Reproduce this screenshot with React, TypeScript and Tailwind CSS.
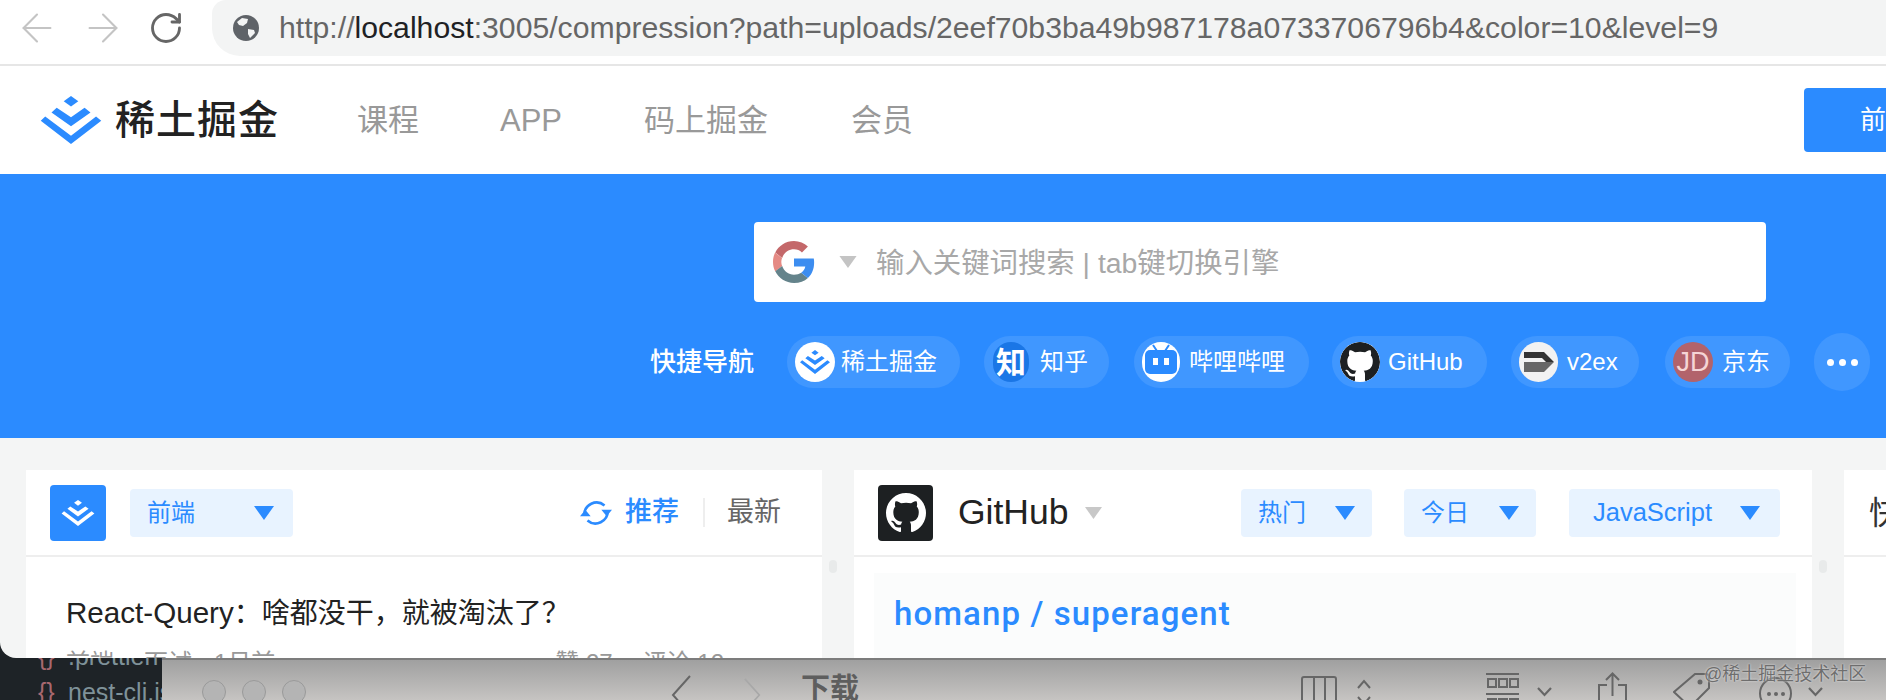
import { ArrowLeft, ArrowRight, RotateCw } from "lucide-react";
import type { ReactNode } from "react";

const sans = "font-['Liberation_Sans','Noto_Sans_CJK_SC',sans-serif]";

function JuejinMark({ className, color }: { className: string; color: string }) {
  return (
    <svg viewBox="0 0 58 46" className={className} fill={color}>
      <path d="M29 0l7 5-7 5-7-5z" />
      <path d="M29 20.300L15.300 11.300l-5 4.400L29 29l18.700-13.300-5.700-4.400z" />
      <path d="M29 38L4.300 19.700 0 23.700 29 46l29-22.300-5-4z" />
    </svg>
  );
}

function GithubMark({ className }: { className: string }) {
  return (
    <svg viewBox="0 0 16 16" className={className} fill="currentColor">
      <path d="M8 0C3.580 0 0 3.580 0 8c0 3.540 2.290 6.530 5.470 7.590.4.070.55-.17.55-.38 0-.19-.01-.82-.01-1.490-2.010.37-2.530-.49-2.690-.94-.09-.23-.48-.94-.82-1.130-.28-.15-.68-.52-.01-.53.63-.01 1.080.58 1.230.82.72 1.210 1.870.87 2.330.66.07-.52.28-.87.51-1.070-1.780-.2-3.640-.89-3.640-3.950 0-.87.31-1.590.82-2.150-.08-.2-.36-1.020.08-2.120 0 0 .67-.21 2.200.82.64-.18 1.320-.27 2-.27s1.360.09 2 .27c1.530-1.040 2.200-.82 2.200-.82.44 1.100.16 1.920.08 2.120.51.56.82 1.270.82 2.150 0 3.070-1.870 3.750-3.650 3.950.29.25.54.73.54 1.480 0 1.070-.01 1.930-.01 2.200 0 .21.15.46.55.38A8.010 8.010 0 0016 8c0-4.420-3.580-8-8-8z" />
    </svg>
  );
}

function GoogleMark() {
  return (
    <svg viewBox="0 0 48 48" className="h-[42px] w-[42px]">
      <path fill="#c4686a" d="M24 9.500c3.500 0 6.700 1.300 9.100 3.500l6.800-6.800C35.800 2.400 30.200 0 24 0 14.600 0 6.500 5.400 2.600 13.200l7.900 6.100C12.400 13.600 17.700 9.500 24 9.500z" />
      <path fill="#e58a84" d="M9.500 24c0-1.600.3-3.100.8-4.600l-7.900-6.200C.9 16.300 0 20 0 24s.9 7.700 2.600 10.800l7.900-6.100c-.6-1.400-1-3-1-4.700z" />
      <path fill="#64838b" d="M24 48c6.500 0 11.900-2.100 15.900-5.800l-7.700-6c-2.100 1.400-4.900 2.300-8.200 2.300-6.300 0-11.600-4.200-13.500-9.900l-7.900 6.100C6.500 42.600 14.600 48 24 48z" />
      <path fill="#3c8df0" d="M47 24.500c0-1.600-.1-3.100-.4-4.500H24v9h12.900c-.6 3-2.200 5.500-4.700 7.200l7.700 6C44.400 38 47 31.900 47 24.500z" />
    </svg>
  );
}

function Caret({ className }: { className: string }) {
  return (
    <svg viewBox="0 0 20 14" className={className} fill="currentColor">
      <path d="M0 0h20L10 14z" />
    </svg>
  );
}

function Select({ label, className }: { label: string; className: string }) {
  return (
    <div className={`flex h-12 items-center justify-between rounded-sm bg-[#e8f3ff] text-[#2b8bff] ${className}`}>
      <span>{label}</span>
      <Caret className="h-[14px] w-5" />
    </div>
  );
}

function Pill({ icon, label, className }: { icon: ReactNode; label: string; className: string }) {
  return (
    <div className={`flex h-[52px] items-center rounded-full bg-white/10 pl-2 text-[24px] text-white ${className}`}>
      {icon}
      <span>{label}</span>
    </div>
  );
}

function Circle({ className, children }: { className: string; children: ReactNode }) {
  return <div className={`flex h-10 shrink-0 items-center justify-center overflow-hidden rounded-full ${className}`}>{children}</div>;
}

function Dot() {
  return (
    <div className="flex w-[32px] shrink-0 justify-center pr-[10px] pt-[90px]">
      <div className="h-[13px] w-[8px] rounded-full bg-[#e8eaea]" />
    </div>
  );
}

export default function App() {
  return (
    <div className={`h-[700px] w-[1886px] overflow-hidden bg-[#1e2327] ${sans}`}>
      {/* browser window */}
      <div className="h-[658px] overflow-hidden rounded-bl-[16px] bg-[#f4f5f5]">
        <div className="flex h-[66px] items-start border-b-2 border-[#e6e6e6] bg-white">
          <div className="flex h-[56px] w-[212px] shrink-0 items-center pl-[14px] text-[#c4c4c4]">
            <ArrowLeft className="h-[46px] w-[46px] shrink-0" strokeWidth={1.1} />
            <ArrowRight className="ml-[20px] h-[46px] w-[46px] shrink-0" strokeWidth={1.1} />
            <RotateCw className="ml-[22px] h-[36px] w-[36px] shrink-0 text-[#666]" strokeWidth={1.9} />
          </div>
          <div className="flex h-[56px] flex-1 items-center rounded-bl-[28px] rounded-tl-[14px] bg-[#f3f4f4] pl-[21px] text-[30.200px] text-[#666]">
            <svg viewBox="0 0 26 26" className="h-[26px] w-[26px] shrink-0">
              <circle cx="13" cy="13" r="13" fill="#5f6368" />
              <path d="M9 3l6 1-1 4-4 3-4-1-2-3zM15 14l6 1 1 3-5 5-2-4z" fill="#f3f4f4" />
            </svg>
            <span className="ml-[20px] whitespace-nowrap">
              http://<span className="text-[#202124]">localhost</span>:3005/compression?path=uploads/2eef70b3ba49b987178a0733706796b4&amp;color=10&amp;level=9
            </span>
          </div>
        </div>

        <div className="flex h-[108px] items-center bg-white pl-[40px]">
          <JuejinMark className="h-[48px] w-[62px]" color="#2b8bff" />
          <span className="ml-[13px] text-[40px] font-medium tracking-[1px] text-[#222]">稀土掘金</span>
          <nav className="ml-[78px] flex items-center pt-[3px] text-[31px] text-[#999]">
            <span>课程</span>
            <span className="ml-[81px]">APP</span>
            <span className="ml-[82px]">码上掘金</span>
            <span className="ml-[83px]">会员</span>
          </nav>
          <div className="ml-auto flex h-16 w-[82px] items-center rounded-l-[4px] bg-[#2b8bff] pl-[56px] text-[26px] text-white">
            <span className="whitespace-nowrap">前端</span>
          </div>
        </div>

        <div className="h-[264px] bg-[#2b8bff] pl-[650px] pt-[48px]">
          <div className="ml-[104px] flex h-[80px] w-[1012px] items-center rounded-[4px] bg-white pl-[19px]">
            <GoogleMark />
            <Caret className="ml-[24px] h-[12px] w-[18px] text-[#c4c4c4]" />
            <span className="ml-[19px] pt-[3px] text-[28.400px] text-[#a8a8a8]">输入关键词搜索 | tab键切换引擎</span>
          </div>
          <div className="mt-[31px] flex items-center">
            <span className="w-[137px] shrink-0 text-[26px] font-medium text-white">快捷导航</span>
            <Pill
              className="w-[173px]"
              label="稀土掘金"
              icon={<Circle className="mr-[6px] w-10 bg-white"><JuejinMark className="h-6 w-[30px]" color="#2b8bff" /></Circle>}
            />
            <Pill
              className="ml-[24px] w-[125px]"
              label="知乎"
              icon={<Circle className="ml-px mr-[11px] w-[36px] bg-[#1a76e6] text-[30px] font-bold">知</Circle>}
            />
            <Pill
              className="ml-[25px] w-[175px]"
              label="哔哩哔哩"
              icon={
                <Circle className="mr-[9px] w-[38px] bg-white">
                  <svg viewBox="0 0 38 40" className="h-10 w-[38px]">
                    <path d="M11 3l4 6M27 3l-4 6" stroke="#2b8bff" strokeWidth="2" />
                    <rect x="3" y="8" width="32" height="24" rx="5" fill="#2b8bff" />
                    <rect x="11" y="16" width="5" height="7" fill="#fff" />
                    <rect x="22" y="16" width="5" height="7" fill="#fff" />
                  </svg>
                </Circle>
              }
            />
            <Pill
              className="ml-[23px] w-[155px]"
              label="GitHub"
              icon={<Circle className="mr-2 w-10 bg-white text-[#1d2022]"><GithubMark className="h-10 w-10" /></Circle>}
            />
            <Pill
              className="ml-[24px] w-[128px]"
              label="v2ex"
              icon={
                <Circle className="mr-[9px] w-[39px] bg-[#f2f2f2]">
                  <svg viewBox="0 0 30 20" className="h-[20px] w-[30px]">
                    <path d="M0 0h20l10 10h-8l-4-4H0z" fill="#333" />
                    <path d="M0 10h30L20 20H0z" fill="#666" />
                  </svg>
                </Circle>
              }
            />
            <Pill
              className="ml-[26px] w-[125px]"
              label="京东"
              icon={<Circle className="mr-[9px] w-10 bg-[#b2636b] text-[27px] text-[#f5d5d5]">JD</Circle>}
            />
            <div className="ml-[24px] flex h-[58px] w-[56px] items-center justify-center gap-[5px] rounded-full bg-white/10">
              <div className="h-[7px] w-[7px] rounded-full bg-white" />
              <div className="h-[7px] w-[7px] rounded-full bg-white" />
              <div className="h-[7px] w-[7px] rounded-full bg-white" />
            </div>
          </div>
        </div>

        {/* cards */}
        <div className="flex pl-[26px] pt-[32px]">
          <div className="w-[796px] shrink-0 bg-white">
            <div className="flex h-[87px] items-center border-b-2 border-[#eeeeee] pl-[24px] pr-[41px]">
              <div className="flex h-14 w-14 items-center justify-center rounded-[4px] bg-[#2b8bff]">
                <JuejinMark className="h-[26px] w-[34px]" color="#fff" />
              </div>
              <Select label="前端" className="ml-6 w-[163px] pl-[17px] pr-[19px] text-[24px]" />
              <svg viewBox="0 0 30 26" className="ml-auto h-[28px] w-[32px] text-[#2b8bff]" fill="currentColor">
                <path d="M4 15A11.500 11.500 0 0 1 23 6" fill="none" stroke="currentColor" strokeWidth="2.400" />
                <path d="M26 11A11.500 11.500 0 0 1 7 20" fill="none" stroke="currentColor" strokeWidth="2.400" />
                <path d="M20 10h10l-5 6zM0 16h10l-5-6z" />
              </svg>
              <span className="ml-[13px] text-[27px] font-medium text-[#2b8bff]">推荐</span>
              <div className="ml-6 h-[29px] w-[2px] bg-[#eeeeee]" />
              <span className="ml-[22px] text-[27px] text-[#666]">最新</span>
            </div>
            <div className="pl-[40px] pr-[98px] pt-[38px]">
              <div className="text-[28px] leading-[36px] text-[#222]">
                <span className="text-[29.600px]">React-Query</span>：啥都没干，就被淘汰了？
              </div>
              <div className="mt-[15px] flex justify-between text-[24px] leading-[32px] text-[#999]">
                <span>
                  前端<span className="ml-[30px]">面试</span><span className="ml-[22px]">1月前</span>
                </span>
                <span>
                  赞 27<span className="ml-[30px]">评论 12</span>
                </span>
              </div>
            </div>
          </div>
          <Dot />
          <div className="w-[958px] shrink-0 bg-white">
            <div className="flex h-[87px] items-center border-b-2 border-[#eeeeee] pl-[24px] pr-[32px]">
              <div className="flex h-14 w-[55px] items-center justify-center rounded-[4px] bg-[#1d2022] text-white">
                <GithubMark className="h-[40px] w-[40px]" />
              </div>
              <span className="ml-[25px] text-[35.500px] text-[#222]">GitHub</span>
              <Caret className="ml-[16px] h-[12px] w-[17px] text-[#c8c8c8]" />
              <Select label="热门" className="ml-auto w-[131px] pl-[17px] pr-[17px] text-[24px]" />
              <Select label="今日" className="ml-[32px] w-[132px] pl-[17px] pr-[17px] text-[24px]" />
              <Select label="JavaScript" className="ml-[33px] w-[211px] pl-[24px] pr-[20px] text-[25.500px]" />
            </div>
            <div className="ml-[20px] mr-[16px] mt-[16px] h-[100px] bg-[#fbfcfc] pl-[20px] pt-[16px] font-['Roboto',sans-serif] text-[33px] font-medium tracking-[1.100px] text-[#2b8bff]">
              homanp / superagent
            </div>
          </div>
          <Dot />
          <div className="flex-1 bg-white">
            <div className="flex h-[87px] items-center overflow-hidden border-b-2 border-[#eeeeee] pl-[25px] text-[32px] text-[#333]">
              <span className="whitespace-nowrap">快捷</span>
            </div>
          </div>
        </div>
      </div>

      {/* window behind */}
      <div className="flex h-[42px]">
        <div className="w-[162px] shrink-0 overflow-hidden pl-[38px] text-[25px] leading-[36px] text-[#7f9299]">
          <div className="-mt-[20px] flex h-[36px] whitespace-nowrap">
            <span className="w-[30px] shrink-0 text-[#a8686f]">{"{}"}</span>
            <span>.prettierrc</span>
          </div>
          <div className="flex h-[36px] whitespace-nowrap">
            <span className="w-[30px] shrink-0 text-[#a8686f]">{"{}"}</span>
            <span>nest-cli.json</span>
          </div>
        </div>
        <div className="relative flex flex-1 items-start overflow-hidden border-t-2 border-[#7c7c7c] bg-gradient-to-b from-[#a0a0a0] to-[#c6c4c2] text-[#666]">
          <div className="ml-[40px] mt-[20px] flex shrink-0 gap-[16px]">
            <div className="h-6 w-6 rounded-full border border-[#9a9a9a] bg-[#b4b4b4]" />
            <div className="h-6 w-6 rounded-full border border-[#9a9a9a] bg-[#b4b4b4]" />
            <div className="h-6 w-6 rounded-full border border-[#9a9a9a] bg-[#b4b4b4]" />
          </div>
          <svg viewBox="0 0 20 40" className="ml-[365px] mt-[15px] h-10 w-5 shrink-0" fill="none" stroke="currentColor" strokeWidth="2">
            <path d="M19 1L2 20l17 19" />
          </svg>
          <svg viewBox="0 0 20 40" className="ml-[53px] mt-[15px] h-10 w-[17px] shrink-0 text-[#a8a8a8]" fill="none" stroke="currentColor" strokeWidth="2">
            <path d="M1 1l17 19L1 39" />
          </svg>
          <span className="ml-[40px] mt-[9px] whitespace-nowrap text-[29px] font-bold leading-[40px] text-[#5e5e5e]">下载</span>
          <svg viewBox="0 0 36 40" className="ml-[442px] mt-[16px] h-10 w-9 shrink-0" fill="none" stroke="currentColor" strokeWidth="2">
            <path d="M1 40V3a2 2 0 0 1 2-2h30a2 2 0 0 1 2 2v37M13 1v39M24 1v39" />
          </svg>
          <svg viewBox="0 0 16 40" className="ml-[19px] mt-[18px] h-10 w-4 shrink-0" fill="none" stroke="currentColor" strokeWidth="2">
            <path d="M2 10l6-7 6 7M2 19l6 7 6-7" />
          </svg>
          <svg viewBox="0 0 33 34" className="ml-[114px] mt-[13px] h-[34px] w-[33px] shrink-0" fill="none" stroke="currentColor" strokeWidth="2">
            <path d="M0 1h33M2 6h8v8H2zM13 6h8v8h-8zM24 6h8v8h-8zM0 21h33M2 26h8v8H2zM13 26h8v8h-8zM24 26h8v8h-8z" />
          </svg>
          <svg viewBox="0 0 15 10" className="ml-[18px] mt-[27px] h-[10px] w-[15px] shrink-0" fill="none" stroke="currentColor" strokeWidth="2.200">
            <path d="M1 1l6.500 7L14 1" />
          </svg>
          <svg viewBox="0 0 29 34" className="ml-[46px] mt-[12px] h-[34px] w-[29px] shrink-0" fill="none" stroke="currentColor" strokeWidth="2">
            <path d="M14.500 24V2M8 8l6.500-6.500L21 8M9 13H1v21M20 13h8v21" />
          </svg>
          <svg viewBox="0 0 37 34" className="ml-[46px] mt-[13px] h-[34px] w-[37px] shrink-0" fill="none" stroke="currentColor" strokeWidth="2">
            <path d="M22 1h11a3 3 0 0 1 3 3v11L17 34 1 19z" />
            <circle cx="27" cy="9" r="1.500" fill="currentColor" />
          </svg>
          <div className="ml-[49px] mt-[17px] flex h-[33px] w-[33px] shrink-0 items-start justify-center gap-[3px] rounded-full border-2 border-[#666] pt-[13px]">
            <div className="h-[4px] w-[4px] rounded-full bg-[#666]" />
            <div className="h-[4px] w-[4px] rounded-full bg-[#666]" />
            <div className="h-[4px] w-[4px] rounded-full bg-[#666]" />
          </div>
          <svg viewBox="0 0 15 10" className="ml-[16px] mt-[27px] h-[10px] w-[15px] shrink-0" fill="none" stroke="currentColor" strokeWidth="2.200">
            <path d="M1 1l6.500 7L14 1" />
          </svg>
          <span className="absolute left-[1542px] top-[1px] whitespace-nowrap text-[18px] text-[#6e6e6e] [text-shadow:0_0_2px_#eee]">@稀土掘金技术社区</span>
        </div>
      </div>
    </div>
  );
}
